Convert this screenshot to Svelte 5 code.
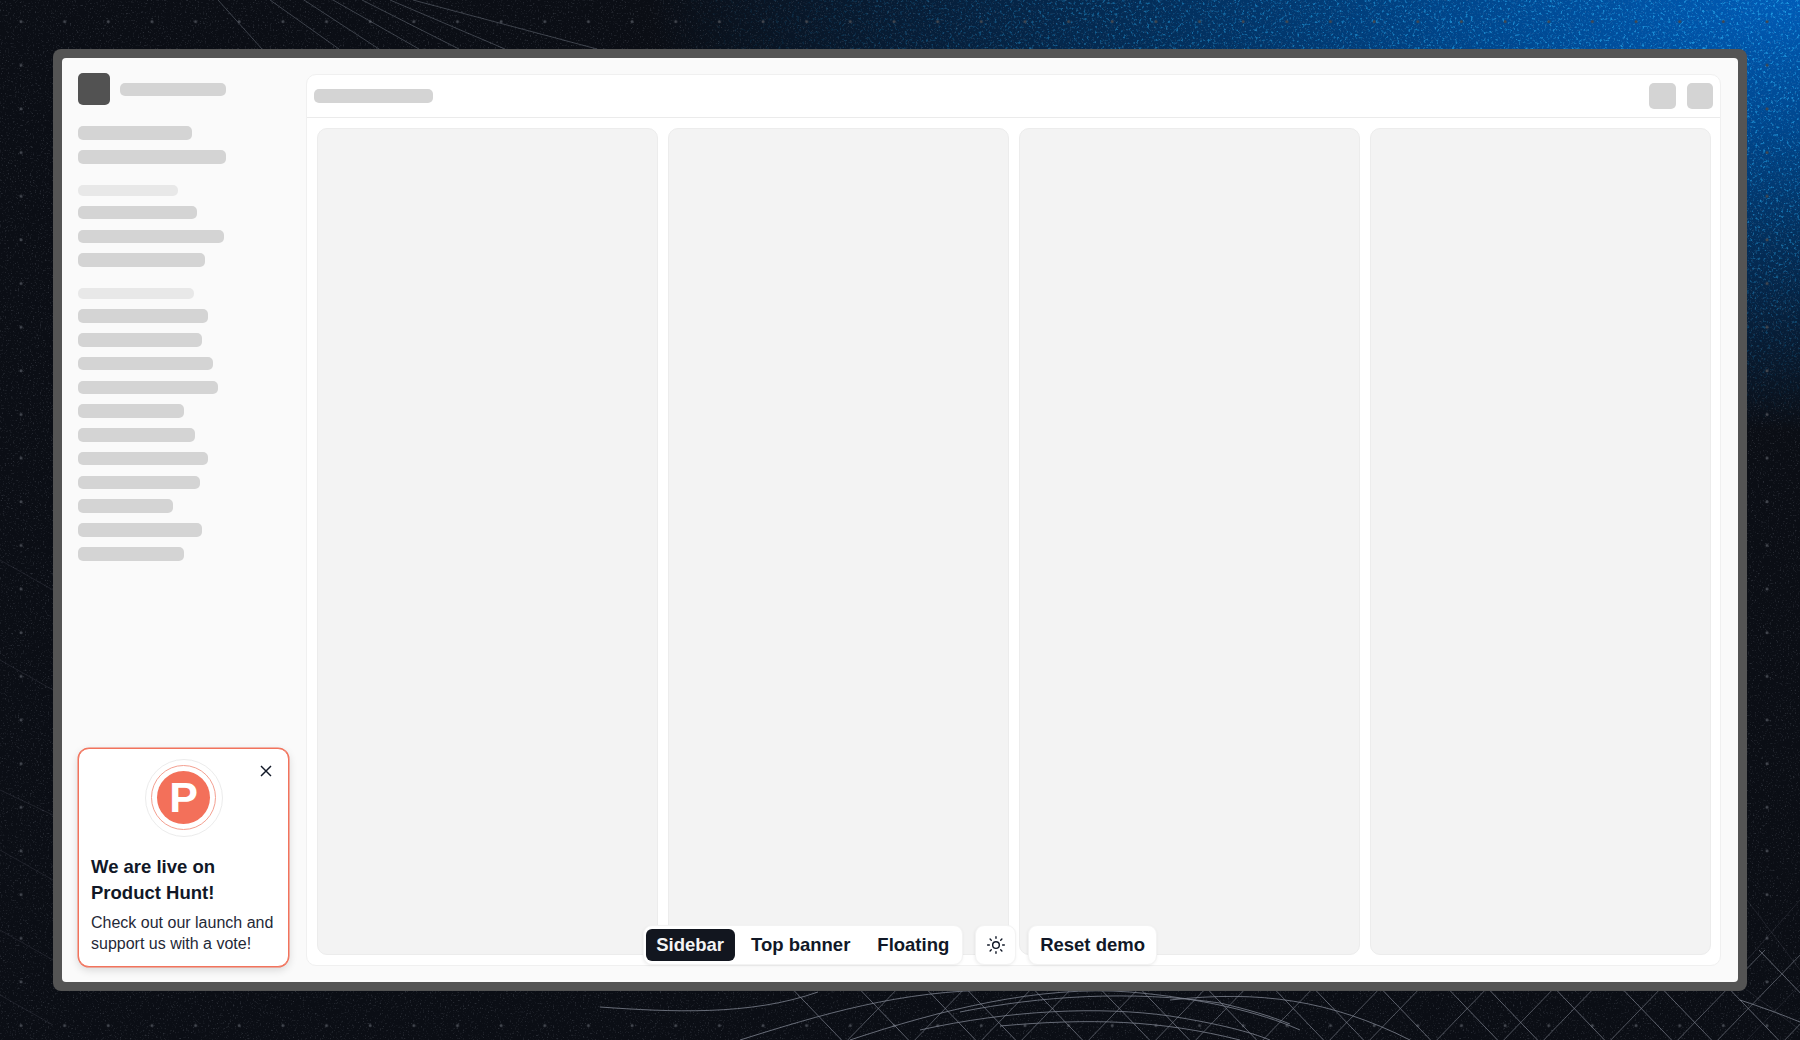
<script>
    const groupOne = [114, 148];
    const groupTwo = [119, 146, 127];
    const groupThree = [130, 124, 135, 140, 106, 117, 130, 122, 95, 124, 106];
    const columns = [1, 2, 3, 4];
    const tabs = ['Sidebar', 'Top banner', 'Floating'];

    // lines of the backdrop
    const fan = [
        [218, 0, 262, 49], [270, 0, 339, 49], [304, 0, 379, 49], [333, 0, 419, 49],
        [362, 0, 459, 49], [390, 0, 505, 49], [413, 0, 597, 49]
    ];
    const arcs = [
        'M600 1007 C670 1012 750 1016 818 992',
        'M740 1040 C820 1015 900 990 1000 990',
        'M850 1040 C940 1010 1040 985 1130 992 C1200 998 1260 1012 1300 1030',
        'M960 1012 C1040 996 1130 990 1220 1003 C1250 1010 1270 1016 1290 1024',
        'M920 1030 C1010 1010 1100 1006 1170 1016 C1220 1024 1250 1032 1270 1040',
        'M1000 1026 C1090 1018 1160 1020 1240 1040',
        'M1170 1000 C1260 990 1330 1000 1410 1040',
        'M1740 1000 C1770 1010 1785 1016 1800 1022'
    ];
    const falling = [];
    const rising = [];
    for (let i = 0; i < 18; i++) {
        const x = 815 + i * 58 + (i % 3) * 9;
        falling.push([x - 60, 950, x + 65, 1080]);
        rising.push([x + 120, 950, x - 6, 1080]);
    }
    const sideLines = [
        [0, 560, 53, 590], [0, 660, 53, 690], [0, 790, 53, 815], [0, 850, 53, 880], [0, 930, 53, 960],
        [0, 995, 53, 1025], [1747, 900, 1800, 970], [1747, 960, 1800, 900], [1747, 1040, 1800, 985], [1747, 990, 1800, 1030]
    ];
</script>

<div class="stage">
    <svg class="backdrop" viewBox="0 0 1800 1040" aria-hidden="true">
        <defs>
            <radialGradient id="glow" gradientUnits="userSpaceOnUse" cx="0" cy="0" r="1" gradientTransform="translate(1800 0) scale(1150 430)">
                <stop offset="0" stop-color="#005cb8" />
                <stop offset="0.3" stop-color="#00468c" />
                <stop offset="0.55" stop-color="#032f5c" />
                <stop offset="0.78" stop-color="#071d36" />
                <stop offset="1" stop-color="#0b0e15" />
            </radialGradient>
            <radialGradient id="fade" gradientUnits="userSpaceOnUse" cx="0" cy="0" r="1" gradientTransform="translate(1800 0) scale(1150 430)">
                <stop offset="0" stop-color="#fff" />
                <stop offset="0.6" stop-color="#fff" stop-opacity="0.6" />
                <stop offset="1" stop-color="#fff" stop-opacity="0" />
            </radialGradient>
            <mask id="fadeMask">
                <rect width="1800" height="1040" fill="url(#fade)" />
            </mask>
            <filter id="speckle" x="0" y="0" width="100%" height="100%">
                <feTurbulence type="fractalNoise" baseFrequency="0.38" numOctaves="2" seed="7" />
                <feColorMatrix values="0 0 0 0 0.02  0 0 0 0 0.4  0 0 0 0 0.85  5 0 0 0 -2.85" />
            </filter>
            <filter id="grain" x="0" y="0" width="100%" height="100%">
                <feTurbulence type="fractalNoise" baseFrequency="0.6" numOctaves="2" seed="3" />
                <feColorMatrix values="0 0 0 0 0.55  0 0 0 0 0.6  0 0 0 0 0.7  4 0 0 0 -2.35" />
            </filter>
            <pattern id="dots" patternUnits="userSpaceOnUse" width="43.65" height="43.65">
                <circle cx="21" cy="21.6" r="1.5" fill="#43474f" />
            </pattern>
        </defs>
        <rect width="1800" height="1040" fill="url(#glow)" />
        <rect width="1800" height="1040" filter="url(#grain)" opacity="0.16" />
        <rect width="1800" height="1040" filter="url(#speckle)" mask="url(#fadeMask)" opacity="0.75" />
        <rect width="1800" height="1040" fill="url(#dots)" />
        <g class="lines">
            {#each fan as [x1, y1, x2, y2]}
                <line {x1} {y1} {x2} {y2} opacity="0.45" />
            {/each}
            {#each sideLines as [x1, y1, x2, y2]}
                <line {x1} {y1} {x2} {y2} opacity="0.18" />
            {/each}
            {#each falling as [x1, y1, x2, y2]}
                <line {x1} {y1} {x2} {y2} opacity="0.7" />
            {/each}
            {#each rising as [x1, y1, x2, y2]}
                <line {x1} {y1} {x2} {y2} opacity="0.6" />
            {/each}
            {#each arcs as d}
                <path {d} opacity="0.8" />
            {/each}
        </g>
    </svg>

    <div class="frame">
        <div class="window">
            <aside class="sidebar">
                <div class="brand">
                    <div class="logo"></div>
                    <div class="bar" style="width: 106px"></div>
                </div>
                <div class="group">
                    {#each groupOne as w}
                        <div class="bar" style="width: {w}px"></div>
                    {/each}
                </div>
                <div class="group">
                    <div class="bar label" style="width: 100px"></div>
                    {#each groupTwo as w}
                        <div class="bar" style="width: {w}px"></div>
                    {/each}
                </div>
                <div class="group">
                    <div class="bar label" style="width: 116px"></div>
                    {#each groupThree as w}
                        <div class="bar" style="width: {w}px"></div>
                    {/each}
                </div>

                <div class="promo">
                    <button class="close" aria-label="Close">
                        <svg width="20" height="20" viewBox="0 0 24 24"><path d="M18 6 6 18M6 6l12 12" /></svg>
                    </button>
                    <div class="ring-outer">
                        <div class="ring-inner">
                            <div class="disc">P</div>
                        </div>
                    </div>
                    <h3>We are live on Product Hunt!</h3>
                    <p>Check out our launch and support us with a vote!</p>
                </div>
            </aside>

            <main class="panel">
                <header>
                    <div class="bar" style="width: 119px"></div>
                    <div class="actions">
                        <div class="square"></div>
                        <div class="square"></div>
                    </div>
                </header>
                <div class="board">
                    {#each columns as c}
                        <div class="column"></div>
                    {/each}
                </div>
            </main>

            <div class="toolbar">
                <div class="tabs box">
                    {#each tabs as tab, i}
                        <button class:active={i === 0}>{tab}</button>
                    {/each}
                </div>
                <button class="box theme" aria-label="Toggle theme">
                    <svg width="20" height="20" viewBox="0 0 24 24">
                        <circle cx="12" cy="12" r="4" />
                        <path d="M12 2v2M12 20v2M4.93 4.93l1.41 1.41M17.66 17.66l1.41 1.41M2 12h2M20 12h2M6.34 17.66l-1.41 1.41M19.07 4.93l-1.41 1.41" />
                    </svg>
                </button>
                <button class="box reset">Reset demo</button>
            </div>
        </div>
    </div>
</div>

<style>
    :global(body) {
        background: #0b0e15;
    }

    .stage {
        position: relative;
        display: flex;
        box-sizing: border-box;
        height: 1040px;
        padding: 49px 53px;
        overflow: hidden;
        font-family: "Liberation Sans", Arial, sans-serif;
        color: #111827;
    }

    .backdrop {
        position: absolute;
        inset: 0;
        width: 100%;
        height: 100%;
    }

    .lines {
        stroke: #7d828e;
        stroke-width: 1;
        fill: none;
    }

    .frame {
        position: relative;
        flex: 1;
        display: flex;
        padding: 9px;
        border-radius: 8px;
        background: #545454;
    }

    .window {
        position: relative;
        flex: 1;
        display: flex;
        border-radius: 4px;
        background: #fafafa;
    }

    .sidebar {
        display: flex;
        flex-direction: column;
        gap: 21px;
        box-sizing: border-box;
        width: 243.7px;
        padding: 15.3px 16.5px 15.3px 16px;
    }

    .brand {
        display: flex;
        align-items: center;
        gap: 10px;
    }

    .logo {
        width: 32px;
        height: 32px;
        border-radius: 5px;
        background: #525252;
    }

    .group {
        display: flex;
        flex-direction: column;
        gap: 10.2px;
    }

    .bar {
        height: 13.6px;
        border-radius: 5px;
        background: #d4d4d4;
    }

    .label {
        height: 11px;
        background: #e8e8e8;
    }

    .promo {
        position: relative;
        display: flex;
        flex-direction: column;
        margin-top: auto;
        padding: 10px 12px 11px;
        border: 1px solid #f2735c;
        border-radius: 11px;
        background: #fff;
        box-shadow: 0 0 0 0.5px #f2735c, 0 3px 9px rgba(0, 0, 0, 0.14);
    }

    .close {
        position: absolute;
        top: 12.5px;
        right: 12.5px;
        display: flex;
        padding: 0;
        border: none;
        background: none;
    }

    .close svg {
        fill: none;
        stroke: #111827;
        stroke-width: 1.7;
    }

    .ring-outer,
    .ring-inner {
        display: flex;
        align-items: center;
        justify-content: center;
        box-sizing: border-box;
        border-radius: 50%;
    }

    .ring-outer {
        align-self: center;
        width: 78px;
        height: 78px;
        border: 1px solid #ececec;
    }

    .ring-inner {
        width: 65.5px;
        height: 65.5px;
        border: 1px solid #f4a091;
    }

    .disc {
        display: flex;
        align-items: center;
        justify-content: center;
        width: 53px;
        height: 53px;
        border-radius: 50%;
        background: #f3705a;
        color: #fff;
        font-size: 43px;
        font-weight: 700;
        line-height: 1;
    }

    h3 {
        margin: 17px 0 6.6px;
        font-size: 18.5px;
        font-weight: 700;
        line-height: 26px;
    }

    p {
        margin: 0;
        font-size: 16px;
        line-height: 21.3px;
        color: #1f2937;
    }

    .panel {
        flex: 1;
        display: flex;
        flex-direction: column;
        margin: 16px 16.7px 16.3px 0;
        border: 1px solid #f0f0f0;
        border-radius: 10px;
        background: #fff;
    }

    header {
        display: flex;
        align-items: center;
        justify-content: space-between;
        height: 42.3px;
        padding: 0 7px 0 7.3px;
        border-bottom: 1px solid #ebebeb;
    }

    .actions {
        display: flex;
        gap: 10.7px;
    }

    .square {
        width: 26.7px;
        height: 26.7px;
        border-radius: 5px;
        background: #d4d4d4;
    }

    .board {
        flex: 1;
        display: grid;
        grid-template-columns: repeat(4, 1fr);
        gap: 10px;
        padding: 10px 9.7px 10px 10.7px;
    }

    .column {
        border: 1px solid #ececec;
        border-radius: 10px;
        background: #f3f3f3;
    }

    .toolbar {
        position: absolute;
        left: 50%;
        bottom: 16.7px;
        transform: translateX(-50%);
        display: flex;
        gap: 12px;
    }

    .box {
        box-sizing: border-box;
        height: 40.6px;
        border: 1px solid #f3f3f3;
        border-radius: 9px;
        background: #fff;
        box-shadow: 0 1px 3px rgba(0, 0, 0, 0.05);
    }

    .tabs {
        display: flex;
        align-items: center;
        gap: 5.6px;
        padding: 0 2.5px 0 1.5px;
    }

    button {
        font-family: inherit;
        font-size: 18.5px;
        font-weight: 700;
        color: #111827;
    }

    .tabs button {
        height: 32px;
        padding: 0 10.7px;
        border: none;
        border-radius: 6px;
        background: none;
    }

    .tabs button.active {
        background: #12161f;
        color: #f4f4f5;
    }

    .theme {
        display: flex;
        align-items: center;
        justify-content: center;
        width: 40.7px;
        padding: 0;
    }

    .theme svg {
        fill: none;
        stroke: #111827;
        stroke-width: 1.7;
        stroke-linecap: round;
    }

    .reset {
        padding: 0 11px;
    }
</style>
